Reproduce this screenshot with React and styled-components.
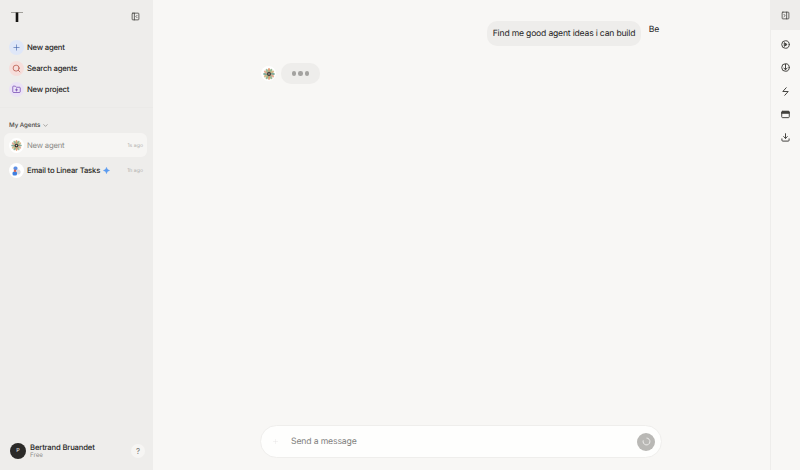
import React from 'react';
import styled, { createGlobalStyle } from 'styled-components';
import { Plus, Search, FolderPlus, ChevronDown, PanelLeftClose, PanelRightClose } from 'lucide-react';

const GlobalStyle = createGlobalStyle`
  html, body { margin: 0; padding: 0; height: 100%; }
  body {
    font-family: Inter, "Liberation Sans", sans-serif;
    background: #f8f7f5;
    overflow: hidden;
    text-rendering: geometricPrecision;
  }
  #root { height: 100%; }
`;

const Page = styled.div`
  display: flex;
  width: 800px;
  height: 470px;
  background: #f8f7f5;
  color: #26251f;
`;

const Sidebar = styled.aside`
  display: flex;
  flex-direction: column;
  flex: 0 0 153px;
  background: #eeedeb;
`;

const SideHead = styled.div`
  display: flex;
  align-items: center;
  justify-content: space-between;
  height: 33px;
  padding: 0 13px 0 11px;
`;

const Logo = styled.div`
  display: flex;
  width: 12px;
  height: 12px;
  align-items: center;
  justify-content: center;
`;

const ActionList = styled.nav`
  display: flex;
  flex-direction: column;
  gap: 6px;
  padding: 7px 8.5px 10px;
  border-bottom: 1px solid #ebeae8;
`;

const Action = styled.div`
  display: flex;
  align-items: center;
  gap: 3.5px;
  height: 15px;
  font-size: 7.7px;
  letter-spacing: -0.2px;
  font-weight: 500;
`;

const ActionBadge = styled.span`
  display: flex;
  align-items: center;
  justify-content: center;
  width: 15px;
  height: 15px;
  border-radius: 50%;
  background: ${(p) => p.$bg};
  color: ${(p) => p.$fg};
`;

const SectionTitle = styled.div`
  display: flex;
  align-items: center;
  gap: 2px;
  margin: 11px 0 2px 9px;
  height: 12px;
  font-size: 6.2px;
  letter-spacing: -0.05px;
  font-weight: 500;
  color: #4b4a46;
`;

const AgentRow = styled.div`
  display: flex;
  align-items: center;
  gap: 3.5px;
  height: 24px;
  margin: 0 6px 1.5px 4px;
  padding: 0 4px 0 4.5px;
  border-radius: 6px;
  background: ${(p) => (p.$active ? '#f6f5f3' : 'transparent')};
`;

const AgentIcon = styled.span`
  display: flex;
  align-items: center;
  justify-content: center;
  flex: 0 0 15px;
  width: 15px;
  height: 15px;
  border-radius: 50%;
  background: #fff;
`;

const AgentName = styled.span`
  font-size: 7.7px;
  letter-spacing: -0.2px;
  font-weight: ${(p) => (p.$muted ? 400 : 500)};
  color: ${(p) => (p.$muted ? '#8a8986' : '#2a2925')};
  white-space: nowrap;
`;

const AgentTime = styled.span`
  margin-left: auto;
  padding-top: 1px;
  font-size: 5.2px;
  color: #afaeab;
  white-space: nowrap;
`;

const Footer = styled.div`
  display: flex;
  align-items: center;
  gap: 4px;
  margin-top: auto;
  height: 38px;
  padding: 0 8px 0 10px;
`;

const Avatar = styled.span`
  display: flex;
  align-items: center;
  justify-content: center;
  width: 16px;
  height: 16px;
  border-radius: 50%;
  background: #2b2a28;
  color: #c9c8c5;
  font-size: 5.5px;
  font-weight: 600;
`;

const UserInfo = styled.div`
  display: flex;
  flex-direction: column;
`;

const UserName = styled.span`
  font-size: 7.7px;
  letter-spacing: -0.17px;
  line-height: 9px;
  font-weight: 500;
`;

const UserPlan = styled.span`
  font-size: 6.2px;
  line-height: 8px;
  color: #8f8e8b;
`;

const HelpButton = styled.span`
  display: flex;
  align-items: center;
  justify-content: center;
  margin-left: auto;
  width: 14px;
  height: 14px;
  border-radius: 50%;
  background: #f6f5f3;
  color: #777673;
  font-size: 8px;
`;

const Main = styled.main`
  display: flex;
  flex-direction: column;
  flex: 1;
  min-width: 0;
`;

const Conversation = styled.div`
  display: flex;
  flex-direction: column;
  flex: 1;
  width: 399px;
  margin-left: 107px;
  padding-top: 21px;
`;

const UserLine = styled.div`
  display: flex;
  justify-content: flex-end;
  align-items: flex-start;
  gap: 8px;
`;

const UserBubble = styled.div`
  display: flex;
  align-items: center;
  width: 154px;
  height: 25px;
  padding: 1px 6px 0;
  box-sizing: border-box;
  border-radius: 10px;
  background: #eeedeb;
  font-size: 8.6px;
  letter-spacing: -0.19px;
  white-space: nowrap;
`;

const UserMark = styled.span`
  padding-top: 4px;
  font-size: 8.6px;
  letter-spacing: -0.19px;
`;

const ThinkingLine = styled.div`
  display: flex;
  align-items: center;
  gap: 5px;
  margin-top: 17px;
  margin-left: 1px;
`;

const Thinking = styled.div`
  display: flex;
  align-items: center;
  justify-content: center;
  gap: 2px;
  width: 39px;
  height: 21px;
  border-radius: 10px;
  background: #eeedeb;
`;

const Dot = styled.span`
  width: 4.5px;
  height: 4.5px;
  border-radius: 50%;
  background: #a3a2a0;
`;

const Composer = styled.div`
  display: flex;
  align-items: center;
  width: 402px;
  height: 33px;
  margin: 0 0 12px 107px;
  padding: 0 6px 0 11px;
  box-sizing: border-box;
  border: 1px solid #efeeec;
  border-radius: 17px;
  background: #fefefd;
`;

const Placeholder = styled.span`
  margin-left: 12px;
  font-size: 8.7px;
  letter-spacing: -0.17px;
  color: #83827f;
`;

const SendButton = styled.span`
  display: flex;
  align-items: center;
  justify-content: center;
  margin-left: auto;
  width: 18px;
  height: 18px;
  border-radius: 50%;
  background: #b9b8b5;
`;

const Rail = styled.aside`
  display: flex;
  flex-direction: column;
  flex: 0 0 29px;
  border-left: 1px solid #eeedeb;
`;

const RailTop = styled.div`
  display: flex;
  align-items: center;
  justify-content: center;
  height: 30px;
  background: #eeedeb;
`;

const RailTools = styled.div`
  display: flex;
  flex-direction: column;
  align-items: center;
  gap: 14.25px;
  padding-top: 10px;
  color: #44433f;
`;

const RailIcon = styled.svg.attrs({ viewBox: '0 0 10 10', fill: 'none', stroke: 'currentColor' })`
  display: block;
  width: 9px;
  height: 9px;
  stroke-width: 1.1;
  stroke-linecap: round;
  stroke-linejoin: round;
`;

function Flower({ size }) {
  const petals = [0, 30, 60, 90, 120, 150, 180, 210, 240, 270, 300, 330];
  const colors = ['#dd8f63', '#86ad80', '#d3b07a', '#6f9f8a', '#e0a184', '#8fb08a'];
  return (
    <svg width={size} height={size} viewBox="0 0 20 20">
      {petals.map((a, i) => (
        <ellipse key={a} cx="10" cy="4" rx="2" ry="3.8" fill={colors[i % 6]} opacity="0.85" transform={`rotate(${a} 10 10)`} />
      ))}
      <circle cx="10" cy="10" r="3.4" fill="#37332e" />
      <circle cx="10" cy="10" r="1.3" fill="#d5d3cf" />
    </svg>
  );
}

function LinearMark() {
  return (
    <svg width="10" height="10" viewBox="0 0 20 20">
      <rect x="10" y="7" width="9" height="10" rx="4" fill="#dcdbe0" />
      <rect x="3" y="11" width="9" height="8" rx="3" fill="#3f7fe0" />
      <rect x="5" y="1" width="8" height="7" rx="3" fill="#5b8fe6" />
      <circle cx="8" cy="9.5" r="2.5" fill="#d9634f" />
    </svg>
  );
}

const SparkIcon = styled.svg`
  margin-left: -1px;
  width: 7px;
  height: 7px;
`;

function SparkMark() {
  return (
    <SparkIcon viewBox="0 0 10 10">
      <path d="M5 .5C5.6 3 7 4.4 9.5 5 7 5.6 5.6 7 5 9.5 4.4 7 3 5.6.5 5 3 4.4 4.4 3 5 .5Z" fill="#5a9bf0" stroke="#5a9bf0" strokeWidth="0.6" />
    </SparkIcon>
  );
}

export default function App() {
  return (
    <Page>
      <GlobalStyle />
      <Sidebar>
        <SideHead>
          <Logo>
            <svg width="12" height="12" viewBox="0 0 12 12">
              <rect x="0" y="1" width="12" height="1" fill="#a09f9a" />
              <rect x="4.7" y="1.5" width="2.6" height="9.5" fill="#151412" />
            </svg>
          </Logo>
          <PanelLeftClose size={9} strokeWidth={2} color="#3a3935" />
        </SideHead>
        <ActionList>
          <Action>
            <ActionBadge $bg="#dfe7f8" $fg="#3d5fa8"><Plus size={9} strokeWidth={1.6} /></ActionBadge>
            New agent
          </Action>
          <Action>
            <ActionBadge $bg="#f6dedb" $fg="#b34a3c"><Search size={9} strokeWidth={1.9} /></ActionBadge>
            Search agents
          </Action>
          <Action>
            <ActionBadge $bg="#ebe2f6" $fg="#6e3fae"><FolderPlus size={9} strokeWidth={1.9} /></ActionBadge>
            New project
          </Action>
        </ActionList>
        <SectionTitle>
          My Agents <ChevronDown size={7} strokeWidth={1.5} />
        </SectionTitle>
        <AgentRow $active>
          <AgentIcon><Flower size={11} /></AgentIcon>
          <AgentName $muted>New agent</AgentName>
          <AgentTime>1s ago</AgentTime>
        </AgentRow>
        <AgentRow>
          <AgentIcon><LinearMark /></AgentIcon>
          <AgentName>Email to Linear Tasks</AgentName>
          <SparkMark />
          <AgentTime>1h ago</AgentTime>
        </AgentRow>
        <Footer>
          <Avatar>P</Avatar>
          <UserInfo>
            <UserName>Bertrand Bruandet</UserName>
            <UserPlan>Free</UserPlan>
          </UserInfo>
          <HelpButton>?</HelpButton>
        </Footer>
      </Sidebar>
      <Main>
        <Conversation>
          <UserLine>
            <UserBubble>Find me good agent ideas i can build</UserBubble>
            <UserMark>Be</UserMark>
          </UserLine>
          <ThinkingLine>
            <AgentIcon><Flower size={12} /></AgentIcon>
            <Thinking><Dot /><Dot /><Dot /></Thinking>
          </ThinkingLine>
        </Conversation>
        <Composer>
          <Plus size={7} strokeWidth={1.2} color="#dedddb" />
          <Placeholder>Send a message</Placeholder>
          <SendButton>
            <svg width="9" height="9" viewBox="0 0 10 10" fill="none" stroke="#f3f2f0" strokeWidth="1">
              <path d="M5 1.2a3.8 3.8 0 1 1-3.6 2.6" />
            </svg>
          </SendButton>
        </Composer>
      </Main>
      <Rail>
        <RailTop><PanelRightClose size={9} strokeWidth={2} color="#3a3935" /></RailTop>
        <RailTools>
          <RailIcon>
            <circle cx="5" cy="5" r="4.2" />
            <path d="M4 3.2 6.8 5 4 6.8Z" fill="currentColor" />
          </RailIcon>
          <RailIcon>
            <circle cx="5" cy="5" r="4.2" />
            <path d="M5 1.5V7.5M3.2 5.6 5 7.6 6.8 5.6" />
          </RailIcon>
          <RailIcon>
            <path d="M5.8.8 2 5H5M4.2 9.2 8 5H5" />
          </RailIcon>
          <RailIcon>
            <rect x=".8" y="1.5" width="8.4" height="7" rx="1" />
            <path d="M.8 3.6H9.2V2.5A1 1 0 0 0 8.2 1.5H1.8A1 1 0 0 0 .8 2.5Z" fill="currentColor" />
          </RailIcon>
          <RailIcon>
            <path d="M5 .8V6M3 4 5 6 7 4" />
            <path d="M1 6.5V8A1 1 0 0 0 2 9H8A1 1 0 0 0 9 8V6.5" />
          </RailIcon>
        </RailTools>
      </Rail>
    </Page>
  );
}
